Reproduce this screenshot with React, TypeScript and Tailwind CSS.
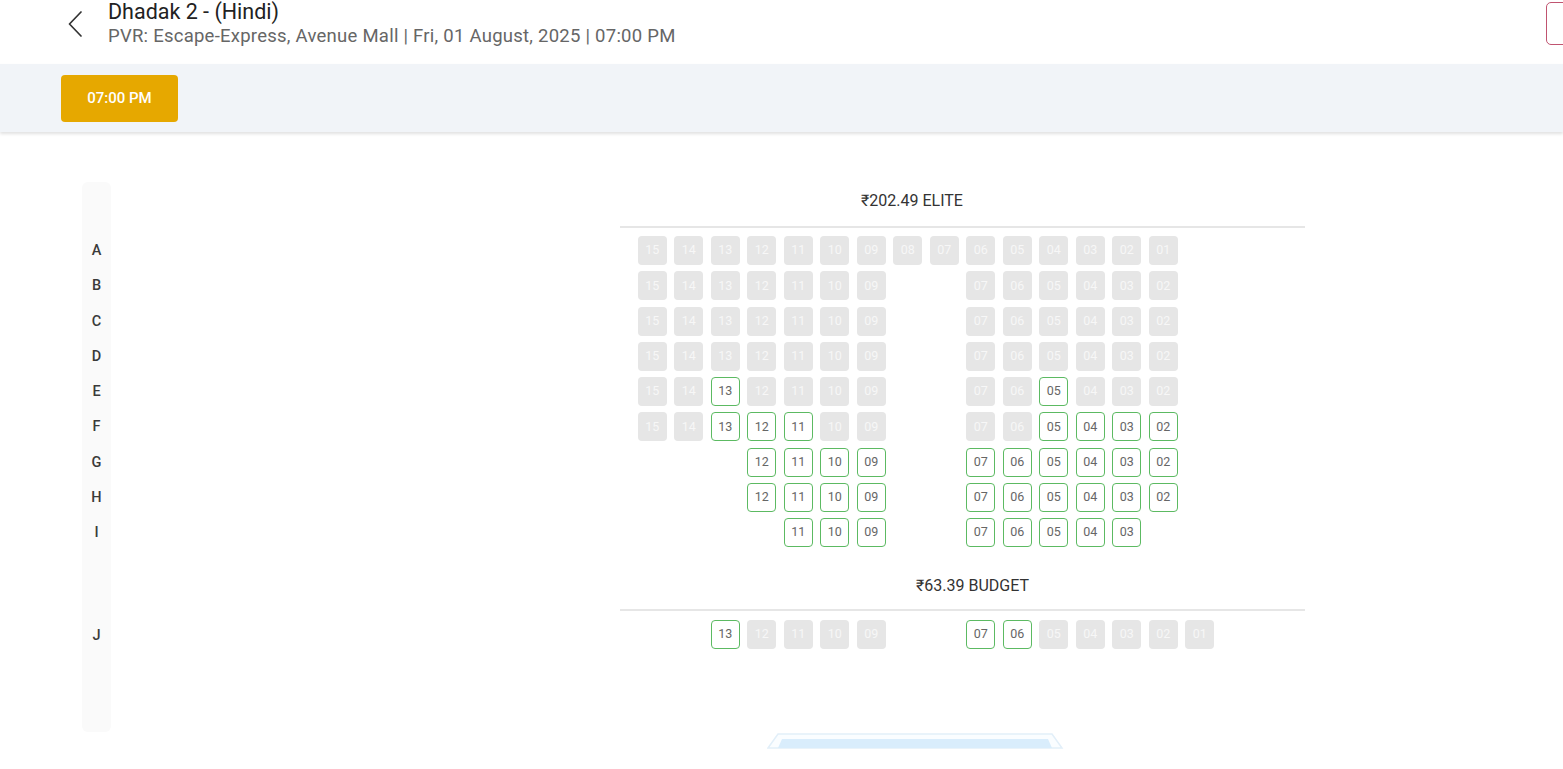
import React from 'react';

type Seat = { col: number; num: string; ok: boolean };

const pad = (n: number) => (n < 10 ? '0' + n : String(n));

// build a row: list of [col, number] and list of available numbers
const makeRow = (cols: [number, number][], avail: number[]): Seat[] =>
  cols.map(([col, n]) => ({ col, num: pad(n), ok: avail.includes(n) }));

const range = (startCol: number, from: number, to: number): [number, number][] => {
  const out: [number, number][] = [];
  let c = startCol;
  for (let n = from; n >= to; n--) out.push([c++, n]);
  return out;
};

const leftFull = range(0, 15, 9);
const rightFull = range(9, 7, 2);

const eliteRows: { id: string; seats: Seat[] }[] = [
  { id: 'A', seats: makeRow(range(0, 15, 1), []) },
  { id: 'B', seats: makeRow([...leftFull, ...rightFull], []) },
  { id: 'C', seats: makeRow([...leftFull, ...rightFull], []) },
  { id: 'D', seats: makeRow([...leftFull, ...rightFull], []) },
  { id: 'E', seats: makeRow([...leftFull, ...rightFull], [13, 5]) },
  { id: 'F', seats: makeRow([...leftFull, ...rightFull], [13, 12, 11, 5, 4, 3, 2]) },
  { id: 'G', seats: makeRow([...range(3, 12, 9), ...rightFull], [12, 11, 10, 9, 7, 6, 5, 4, 3, 2]) },
  { id: 'H', seats: makeRow([...range(3, 12, 9), ...rightFull], [12, 11, 10, 9, 7, 6, 5, 4, 3, 2]) },
  { id: 'I', seats: makeRow([...range(4, 11, 9), ...range(9, 7, 3)], [11, 10, 9, 7, 6, 5, 4, 3]) },
];

const budgetRow: Seat[] = makeRow([...range(2, 13, 9), ...range(9, 7, 1)], [13, 7, 6]);

const SeatBox = ({ seat }: { seat: Seat }) =>
  seat.ok ? (
    <div className="w-[29px] h-[29px] rounded-[4px] border-[1.5px] border-[#5cba62] bg-white flex items-center justify-center text-[12.5px] text-[#666]">
      {seat.num}
    </div>
  ) : (
    <div className="w-[29px] h-[29px] rounded-[4px] bg-[#e6e6e6] flex items-center justify-center text-[12.5px] text-[#f7f7f7]">
      {seat.num}
    </div>
  );

const SeatRow = ({ seats }: { seats: Seat[] }) => {
  const cells = Array.from({ length: 16 }, (_, c) => seats.find(s => s.col === c));
  return (
    <div className="flex h-[35.25px] items-center">
      {cells.map((s, i) => (
        <div key={i} className="w-[36.5px] flex justify-center">
          {s ? <SeatBox seat={s} /> : null}
        </div>
      ))}
    </div>
  );
};

export default function App() {
  const letters = ['A', 'B', 'C', 'D', 'E', 'F', 'G', 'H', 'I'];
  return (
    <div className="w-[1563px] h-[769px] overflow-hidden bg-white font-['Roboto',sans-serif]">
      {/* header */}
      <div className="h-[64px] flex items-start">
        <div className="ml-[67px] mt-[11px] w-[16px]">
          <svg width="16" height="26" viewBox="0 0 16 26">
            <polyline points="14,1 2.5,13 14,25" fill="none" stroke="#333" strokeWidth="1.7" strokeLinecap="round" strokeLinejoin="round" />
          </svg>
        </div>
        <div className="ml-[25px]">
          <div className="text-[21.5px] leading-[23px] text-[#222]">Dhadak 2 - (Hindi)</div>
          <div className="mt-[1.7px] text-[18.5px] tracking-[0.25px] leading-[22px] text-[#666]">
            PVR: Escape-Express, Avenue Mall | Fri, 01 August, 2025 | 07:00 PM
          </div>
        </div>
        <div className="ml-auto mr-[-83px] mt-[2px] w-[100px] h-[43px] rounded-[5px] border-[1.5px] border-[#c05470] shrink-0" />
      </div>

      {/* time band */}
      <div className="h-[68px] bg-[#f1f4f8] shadow-[0_2px_3px_rgba(0,0,0,0.12)] pl-[61px] pt-[11px]">
        <button className="w-[117px] h-[47px] rounded-[4px] bg-[#e6a800] text-white text-[15px] font-medium">
          07:00 PM
        </button>
      </div>

      {/* seat map */}
      <div className="flex items-start mt-[50px]">
        <div className="ml-[82px] w-[29px] h-[550px] rounded-md bg-[#fafafa] pt-[51.4px] flex flex-col items-center text-[14.5px] font-medium text-[#3a3a3a]">
          {letters.map(l => (
            <div key={l} className="h-[35.25px] flex items-center">{l}</div>
          ))}
          <div className="mt-[67.5px] h-[35.25px] flex items-center">J</div>
        </div>

        <div className="ml-[509px] w-[685px] pt-[9px]">
          <div className="pl-[241px] text-[16px] leading-[20px] text-[#333]">₹202.49 ELITE</div>
          <div className="mt-[15px] h-[2px] bg-[#e6e6e6]" />
          <div className="pl-[14px] mt-[5px]">
            {eliteRows.map(r => (
              <SeatRow key={r.id} seats={r.seats} />
            ))}
          </div>
          <div className="mt-[26px] pl-[296px] text-[16px] leading-[20px] text-[#333]">₹63.39 BUDGET</div>
          <div className="mt-[13px] h-[2px] bg-[#e6e6e6]" />
          <div className="pl-[14px] mt-[5.5px]">
            <SeatRow seats={budgetRow} />
          </div>
          <div className="ml-[147px] mt-[81px]">
            <svg width="298" height="16" viewBox="0 0 298 16">
              <polygon points="1,15 11,1 285,1 295,15" fill="#fafdff" stroke="#e2eff9" strokeWidth="1.5" />
              <polygon points="11,15 15,6 281,6 285,15" fill="#d9edfc" />
            </svg>
          </div>
        </div>
      </div>
    </div>
  );
}
